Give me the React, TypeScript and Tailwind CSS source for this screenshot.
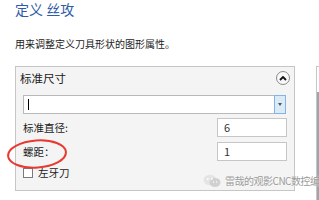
import React from "react";

const font = { fontFamily: '"Noto Sans CJK SC", "Noto Sans", sans-serif' };

export default function App() {
  return (
    <div
      className="relative w-[319px] h-[200px] overflow-hidden bg-white text-[#1a1a1a]"
      style={font}
    >
      <div className="pl-[15px] pt-[1px] flex flex-col">
        <div className="text-[14px] leading-[17px] text-[#2f5ba6]">定义 丝攻</div>
        <div className="mt-[19px] text-[10px] leading-[14px] text-[#222]">
          用来调整定义刀具形状的图形属性。
        </div>
        <div className="mt-[15px] flex">
          <div className="shrink-0 w-[280px] h-[125px] border border-[#c6c6c6] bg-[#f4f4f4] pl-[7px] pr-[8px] pt-[4px] flex flex-col">
            <div className="flex items-center justify-between h-[14px]">
              <span className="text-[11.5px] leading-[14px] -ml-[3px]">标准尺寸</span>
              <div className="w-[14px] h-[14px] rounded-full border border-[#8a8a8a] bg-[#f8f8f8] flex items-center justify-center -mr-[4px]">
                <svg width="8" height="6" viewBox="0 0 8 6">
                  <path d="M1 5 L4 2 L7 5" fill="none" stroke="#111" strokeWidth="1.8" />
                </svg>
              </div>
            </div>
            <div className="mt-[10px] h-[19px] flex border border-[#b9b9b9] bg-white">
              <div className="flex-1 flex items-center pl-[4px]">
                <div className="w-px h-[11px] bg-black" />
              </div>
              <div className="w-[12px] -my-px -mr-px bg-[#dbeaf7] border border-[#82b5e3] flex items-center justify-center">
                <svg width="4" height="3" viewBox="0 0 4 3">
                  <path d="M0 0 L4 0 L2 3 Z" fill="#555" />
                </svg>
              </div>
            </div>
            <div className="mt-[4px] flex items-center justify-between">
              <span className="text-[10.5px] leading-[13px]">标准直径:</span>
              <div className="w-[70px] h-[19px] border border-[#c6c6c6] bg-white text-[11px] leading-[17px] pl-[6px] text-[#333] -mr-[1px]">
                6
              </div>
            </div>
            <div className="mt-[5px] flex items-center justify-between">
              <span className="text-[10.5px] leading-[13px]">螺距：</span>
              <div className="w-[70px] h-[19px] border border-[#c6c6c6] bg-white text-[11px] leading-[17px] pl-[6px] text-[#333] -mr-[1px]">
                1
              </div>
            </div>
            <div className="mt-[6px] flex items-center gap-[5px]">
              <div className="w-[10px] h-[10px] border border-[#7a7a7a] bg-white" />
              <span className="text-[10.5px] leading-[12px]">左牙刀</span>
            </div>
          </div>
          <div className="shrink-0 ml-[21px] w-[20px] h-[140px] border-l border-t border-[#c6c6c6] flex flex-col">
            <div className="h-[25px] bg-white" />
            <div className="flex-1 bg-[#9ea4ab]" />
          </div>
        </div>
        <div className="shrink-0 mt-[4px] w-[280px] h-[20px] border border-[#c6c6c6] bg-[#f4f4f4]" />
      </div>

      <svg
        className="absolute left-0 top-0 pointer-events-none"
        width="319"
        height="200"
        viewBox="0 0 319 200"
      >
        <ellipse
          cx="37"
          cy="154"
          rx="29"
          ry="13.5"
          fill="none"
          stroke="#e63a32"
          strokeWidth="2"
          transform="rotate(-4 37 154)"
        />
      </svg>

      <div className="absolute left-[203px] top-[174px] flex items-center gap-[4px]">
        <svg width="18" height="14" viewBox="0 0 18 14">
          <ellipse cx="7" cy="6" rx="6.5" ry="5.2" fill="#e4e4e4" />
          <ellipse cx="12" cy="8.5" rx="5.5" ry="4.5" fill="#d0d0d0" />
          <circle cx="4.8" cy="5" r="0.9" fill="#fff" />
          <circle cx="8.8" cy="5" r="0.9" fill="#fff" />
          <circle cx="10.5" cy="8" r="0.7" fill="#fff" />
          <circle cx="13.5" cy="8" r="0.7" fill="#fff" />
        </svg>
        <span className="text-[10px] leading-[12px] tracking-[-0.5px] text-[#9a9a9a] whitespace-nowrap [text-shadow:0_0_2px_#fff]">
          雷哉的观影CNC数控编程
        </span>
      </div>
    </div>
  );
}
